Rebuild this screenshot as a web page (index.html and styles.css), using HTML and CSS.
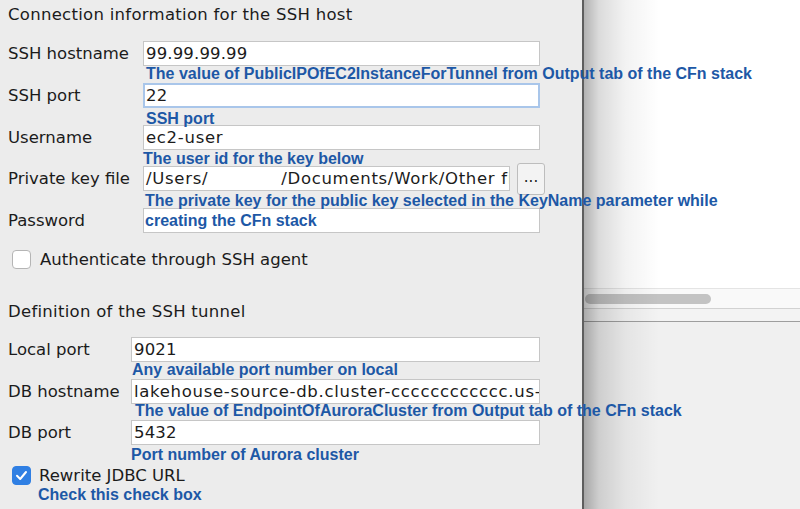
FILE: index.html
```html
<!DOCTYPE html>
<html lang="en">
<head>
<meta charset="utf-8">
<title>SSH tunnel settings</title>
<link rel="stylesheet" href="styles.css">
</head>
<body>
<div class="app">
  <div class="panel">
    <h2 class="section-title">Connection information for the SSH host</h2>
    <div class="form form-ssh">
      <div class="label">SSH hostname</div>
      <div class="cell">
        <div class="field num">99.99.99.99</div>
        <div class="note note-a">The value of PublicIPOfEC2InstanceForTunnel from Output tab of the CFn stack</div>
      </div>

      <div class="label">SSH port</div>
      <div class="cell">
        <div class="field num focused">22</div>
        <div class="note note-b">SSH port</div>
      </div>

      <div class="label">Username</div>
      <div class="cell">
        <div class="field">ec2-user</div>
        <div class="note note-c">The user id for the key below</div>
      </div>

      <div class="label">Private key file</div>
      <div class="cell file-cell">
        <div class="field file-field"><span>/Users/</span><span class="path-rest">/Documents/Work/Other files/keys/tunnel.pem</span></div>
        <div class="browse">...</div>
        <div class="note note-d">The private key for the public key selected in the KeyName parameter while<br>creating the CFn stack</div>
      </div>

      <div class="label">Password</div>
      <div class="cell">
        <div class="field"></div>
      </div>
    </div>

    <div class="check check-agent">
      <span class="box"></span>
      <span class="check-text">Authenticate through SSH agent</span>
    </div>

    <h2 class="section-title section-tunnel">Definition of the SSH tunnel</h2>
    <div class="form form-tunnel">
      <div class="label">Local port</div>
      <div class="cell">
        <div class="field num">9021</div>
        <div class="note note-e">Any available port number on local</div>
      </div>

      <div class="label">DB hostname</div>
      <div class="cell">
        <div class="field">lakehouse-source-db.cluster-cccccccccccc.us-east-1.rds.amazonaws.com</div>
        <div class="note note-f">The value of EndpointOfAuroraCluster from Output tab of the CFn stack</div>
      </div>

      <div class="label">DB port</div>
      <div class="cell">
        <div class="field num">5432</div>
        <div class="note note-g">Port number of Aurora cluster</div>
      </div>
    </div>

    <div class="check check-jdbc">
      <span class="box checked">
        <svg viewBox="0 0 19 19" width="19" height="19"><path d="M5 9.8 L8.2 13 L14 6" fill="none" stroke="#ffffff" stroke-width="2" stroke-linecap="round" stroke-linejoin="round"/></svg>
      </span>
      <span class="check-text">Rewrite JDBC URL</span>
      <div class="note note-h">Check this check box</div>
    </div>
  </div>

  <div class="divider"></div>

  <div class="side">
    <div class="side-top"></div>
    <div class="hscroll"><div class="thumb"></div></div>
    <div class="side-strip"></div>
    <div class="side-bottom"></div>
    <div class="shade"></div>
  </div>
</div>
</body>
</html>
```

FILE: styles.css
```css
html, body {
  margin: 0;
  padding: 0;
}

body {
  width: 800px;
  height: 509px;
  overflow: hidden;
  font-family: "DejaVu Sans", Verdana, sans-serif;
  color: #1b1b1b;
  background: #ececec;
}

.app {
  display: flex;
  width: 800px;
  height: 509px;
}

.panel {
  position: relative;
  z-index: 2;
  width: 582px;
  flex: none;
  box-sizing: border-box;
  padding: 4px 0 0 8px;
  background: #ececec;
  font-size: 16.5px;
}

.section-title {
  margin: 0;
  font-size: 16.5px;
  font-weight: normal;
  letter-spacing: 0.28px;
  line-height: 22px;
  height: 22px;
}

.section-tunnel {
  margin-top: 32px;
}

.form {
  display: grid;
  align-items: center;
}

.form-ssh {
  margin-top: 15px;
  grid-template-columns: 135px 397px;
  grid-auto-rows: 25px;
  row-gap: 16.75px;
}

.form-tunnel {
  margin-top: 14px;
  grid-template-columns: 123px 409px;
  grid-auto-rows: 25px;
  row-gap: 16.5px;
}

.label {
  line-height: 25px;
  white-space: nowrap;
}

.cell {
  position: relative;
  height: 25px;
}

.field {
  box-sizing: border-box;
  height: 25px;
  background: #ffffff;
  border: 1px solid #c6c6c6;
  padding: 0 2px;
  line-height: 23px;
  letter-spacing: 0.7px;
  white-space: nowrap;
  overflow: hidden;
}

.field.num {
  letter-spacing: 0.15px;
}

.field.focused {
  border: 2px solid #a9c6ea;
  line-height: 21px;
  padding: 0 1px;
}

.file-cell {
  display: flex;
  align-items: center;
  gap: 7px;
}

.file-field {
  width: 367px;
  flex: none;
}

.path-rest {
  margin-left: 73px;
}

.browse {
  box-sizing: border-box;
  width: 28px;
  height: 32px;
  flex: none;
  margin: -4px 0;
  background: #f3f3f3;
  border: 1px solid #bdbdbd;
  border-radius: 3px;
  text-align: center;
  line-height: 26px;
  font-size: 15px;
}

.note {
  position: absolute;
  z-index: 3;
  left: 3px;
  top: 100%;
  font-family: "Liberation Sans", Arial, sans-serif;
  font-weight: bold;
  font-size: 16px;
  line-height: 16px;
  color: #1d58a6;
  white-space: nowrap;
}

.note-a { margin-top: 0; }
.note-b { margin-top: 3px; }
.note-c { left: 0; margin-top: 1px; }
.note-d { left: 2px; line-height: 20px; top: calc(100% - 0px); }
.note-e { left: 1px; margin-top: 0; }
.note-f { left: 4px; margin-top: -1px; }
.note-g { left: 0; margin-top: 2px; }
.note-h { left: 26px; margin-top: 2px; }

.check {
  position: relative;
  display: flex;
  align-items: center;
  height: 19px;
  margin-left: 4px;
  gap: 9px;
}

.check-agent {
  margin-top: 17px;
}

.check-jdbc {
  margin-top: 21px;
  gap: 8px;
}

.box {
  box-sizing: border-box;
  width: 19px;
  height: 19px;
  flex: none;
  background: #ffffff;
  border: 1px solid #b5b5b5;
  border-radius: 4px;
}

.box.checked {
  background: #2f7fe3;
  border-color: #2f7fe3;
  position: relative;
}

.box.checked svg {
  position: absolute;
  left: -1px;
  top: -1px;
}

.check-text {
  line-height: 19px;
}

.divider {
  width: 2px;
  flex: none;
  background: #5e5e5e;
}

.side {
  position: relative;
  flex: 1;
  display: flex;
  flex-direction: column;
  background: #ffffff;
}

.side-top {
  height: 288px;
  background: #ffffff;
  border-bottom: 1px solid #e4e4e4;
}

.hscroll {
  height: 19px;
  background: #f9f9f9;
  border-bottom: 1px solid #d2d2d2;
  position: relative;
}

.thumb {
  position: absolute;
  left: 1px;
  top: 5px;
  width: 126px;
  height: 10px;
  border-radius: 5px;
  background: #c3c3c3;
}

.side-strip {
  height: 12px;
  background: #f3f3f3;
  border-bottom: 1px solid #9e9e9e;
}

.side-bottom {
  flex: 1;
  background: #f0f0f0;
}

.shade {
  position: absolute;
  left: 0;
  top: 0;
  bottom: 0;
  width: 75px;
  background: linear-gradient(to right, rgba(0,0,0,0.3), rgba(0,0,0,0.14) 20%, rgba(0,0,0,0.05) 55%, rgba(0,0,0,0));
  pointer-events: none;
}
```
